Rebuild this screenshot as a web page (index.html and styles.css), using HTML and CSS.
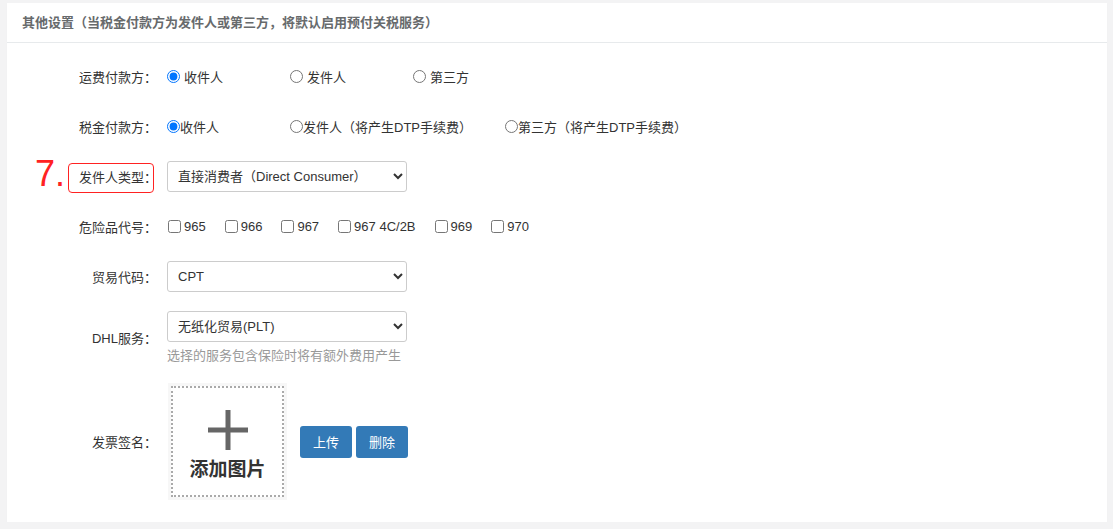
FILE: index.html
```html
<!DOCTYPE html>
<html lang="zh-CN">
<head>
    <meta charset="UTF-8">
    <title>其他设置</title>
    <link rel="stylesheet" href="styles.css">
</head>
<body>
    <div class="panel">
        <div class="panel-title">其他设置（当税金付款方为发件人或第三方，将默认启用预付关税服务）</div>
        <div class="panel-body">
            <div class="form-row">
                <div class="form-label">运费付款方：</div>
                <div class="form-field">
                    <label class="opt opt-123"><input type="radio" name="freight" checked> 收件人</label>
                    <label class="opt opt-123"><input type="radio" name="freight"> 发件人</label>
                    <label class="opt"><input type="radio" name="freight"> 第三方</label>
                </div>
            </div>
            <div class="form-row">
                <div class="form-label">税金付款方：</div>
                <div class="form-field tight">
                    <label class="opt opt-123"><input type="radio" name="tax" checked>收件人</label>
                    <label class="opt opt-215"><input type="radio" name="tax">发件人（将产生DTP手续费）</label>
                    <label class="opt"><input type="radio" name="tax">第三方（将产生DTP手续费）</label>
                </div>
            </div>
            <div class="form-row">
                <div class="form-label"><span class="mark-num">7.</span><span class="marked">发件人类型：</span></div>
                <div class="form-field">
                    <select class="select">
                        <option>直接消费者（Direct Consumer）</option>
                    </select>
                </div>
            </div>
            <div class="form-row">
                <div class="form-label">危险品代号：</div>
                <div class="form-field">
                    <label class="chk"><input type="checkbox">965</label>
                    <label class="chk"><input type="checkbox">966</label>
                    <label class="chk"><input type="checkbox">967</label>
                    <label class="chk"><input type="checkbox">967 4C/2B</label>
                    <label class="chk"><input type="checkbox">969</label>
                    <label class="chk"><input type="checkbox">970</label>
                </div>
            </div>
            <div class="form-row">
                <div class="form-label">贸易代码：</div>
                <div class="form-field">
                    <select class="select">
                        <option>CPT</option>
                    </select>
                </div>
            </div>
            <div class="form-row">
                <div class="form-label">DHL服务：</div>
                <div class="form-field column">
                    <select class="select">
                        <option>无纸化贸易(PLT)</option>
                    </select>
                    <div class="help">选择的服务包含保险时将有额外费用产生</div>
                </div>
            </div>
            <div class="form-row upload-row">
                <div class="form-label">发票签名：</div>
                <div class="form-field">
                    <div class="upload">
                        <div class="upload-inner">
                            <svg width="40" height="40" viewBox="0 0 40 40">
                                <rect x="17.5" y="0" width="5" height="40" fill="#666"/>
                                <rect x="0" y="17.5" width="40" height="5" fill="#666"/>
                            </svg>
                            <div class="upload-text">添加图片</div>
                        </div>
                    </div>
                    <button class="btn">上传</button>
                    <button class="btn">删除</button>
                </div>
            </div>
        </div>
    </div>
</body>
</html>
```

FILE: styles.css
```css
*{
    margin: 0;
    padding: 0;
    box-sizing: border-box;
}
body{
    background: #f3f3f4;
    font-family: "Liberation Sans", "Noto Sans CJK SC", sans-serif;
    font-size: 13px;
    color: #333;
    padding: 3px 6px 0 7px;
}
.panel{
    background: #fff;
    height: 519px;
    box-shadow: 0 1px 1px rgba(0,0,0,0.04);
}
.panel-title{
    height: 40px;
    line-height: 39px;
    padding-left: 15px;
    font-weight: bold;
    color: #676a6c;
    border-bottom: 1px solid #e7eaec;
}
.panel-body{
    padding-top: 18px;
}
.form-row{
    display: flex;
    align-items: center;
    min-height: 31px;
    margin-bottom: 19px;
}
.form-label{
    width: 150px;
    text-align: right;
    position: relative;
    flex-shrink: 0;
}
.form-field{
    margin-left: 10px;
    display: flex;
    align-items: center;
}
.form-field.column{
    flex-direction: column;
    align-items: flex-start;
}
.opt{
    display: flex;
    align-items: center;
}
.opt input{
    margin: 0 4px 0 0;
    width: 13px;
    height: 13px;
}
.tight .opt input{
    margin-right: 0;
}
.opt-123{
    width: 123px;
}
.opt-215{
    width: 215px;
}
.chk{
    display: flex;
    align-items: center;
    margin-right: 18px;
}
.chk input{
    margin: 0 3px 0 1px;
    width: 13px;
    height: 13px;
}
.select{
    width: 240px;
    height: 31px;
    border: 1px solid #ccc;
    border-radius: 3px;
    padding: 0 6px;
    font-family: "Liberation Sans", "Noto Sans CJK SC", sans-serif;
    font-size: 13px;
    color: #333;
    background: #fff;
}
.help{
    color: #999;
    margin-top: 3px;
}
.marked{
    position: relative;
}
.marked::after{
    content: "";
    position: absolute;
    left: -11px;
    right: 3px;
    top: -7px;
    bottom: -8px;
    border: 1.5px solid #f22;
    border-radius: 4px;
}
.mark-num{
    position: absolute;
    left: 28px;
    top: -11px;
    font-size: 36px;
    color: #f22;
    line-height: 1;
}
.upload-row{
    margin-top: 3px;
}
.upload{
    width: 119px;
    height: 117px;
    padding: 3px;
    background: #f7f7f7;
    margin-left: 1px;
}
.upload-inner{
    width: 100%;
    height: 100%;
    background: #fff;
    border: 2px dotted #aaa;
    display: flex;
    flex-direction: column;
    align-items: center;
    padding-top: 22px;
}
.upload-text{
    font-size: 19px;
    font-weight: bold;
    color: #333;
    margin-top: 4px;
}
.btn{
    width: 52px;
    height: 32px;
    border: none;
    border-radius: 3px;
    background: #337ab7;
    color: #fff;
    font-family: "Liberation Sans", "Noto Sans CJK SC", sans-serif;
    font-size: 13px;
    margin-left: 4px;
}
.upload + .btn{
    margin-left: 13px;
}
```
